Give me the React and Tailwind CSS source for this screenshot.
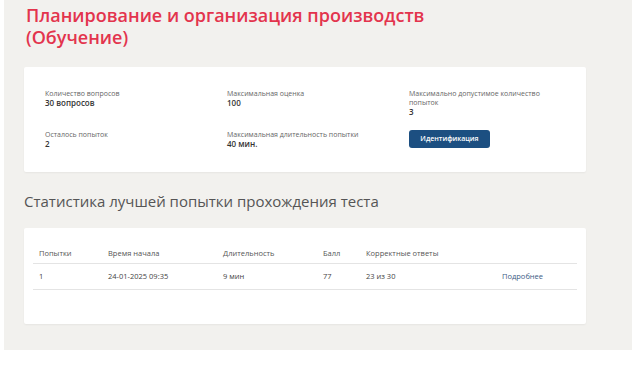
import React from 'react';

const facts = [
  [
    { label: 'Количество вопросов', value: '30 вопросов' },
    { label: 'Максимальная оценка', value: '100' },
    { label: 'Максимально допустимое количество попыток', value: '3' },
  ],
  [
    { label: 'Осталось попыток', value: '2' },
    { label: 'Максимальная длительность попытки', value: '40 мин.' },
    null,
  ],
];

const columns = ['Попытки', 'Время начала', 'Длительность', 'Балл', 'Корректные ответы', ''];
const rows = [['1', '24-01-2025 09:35', '9 мин', '77', '23 из 30']];

const App = () => {
  return (
    <div className="w-[632px] h-[367px] bg-white pl-[4px] font-['Open_Sans',sans-serif]">
      <div className="h-[350px] bg-[#f2f1ee] pl-[20px] pr-[46px] pt-[4px]">
        {/* Page title */}
        <h1 className="ml-[2px] text-[18px] leading-[22px] font-semibold text-[#e3344d]">
          Планирование и организация производств
          <br />
          (Обучение)
        </h1>

        {/* Test info card */}
        <div className="mt-[19px] bg-white rounded-[2px] shadow-[0_1px_2px_rgba(0,0,0,0.05)] pl-[21px] pt-[22px] pb-[23px]">
          <div className="grid grid-cols-[182px_182px_140px] gap-y-[13px]">
            {facts.flat().map((item, index) =>
              item ? (
                <div key={index}>
                  <div className="text-[7px] leading-[9px] text-[#666]">{item.label}</div>
                  <div className="text-[8px] leading-[10px] font-semibold text-[#333]">{item.value}</div>
                </div>
              ) : (
                <div key={index}>
                  <button className="block h-[18px] w-[81px] rounded-[3px] bg-[#1c4f81] text-[7px] font-semibold text-white">
                    Идентификация
                  </button>
                </div>
              )
            )}
          </div>
        </div>

        {/* Best attempt stats */}
        <h2 className="mt-[18px] text-[15px] leading-[22px] text-[#555]">
          Статистика лучшей попытки прохождения теста
        </h2>

        <div className="mt-[16px] bg-white rounded-[2px] shadow-[0_1px_2px_rgba(0,0,0,0.05)] px-[9px] pt-[16px] pb-[34px]">
          <div className="grid grid-cols-[69px_115px_100px_43px_136px_1fr] text-[7.5px]">
            {columns.map((col, index) => (
              <div
                key={index}
                className="h-[20px] pl-[6px] flex items-center border-b border-[#e4e4e4] text-[#555]"
              >
                {col}
              </div>
            ))}
            {rows.map((row, r) => (
              <React.Fragment key={r}>
                {row.map((cell, c) => (
                  <div
                    key={c}
                    className="h-[26px] pl-[6px] flex items-center border-b border-[#e4e4e4] text-[#444]"
                  >
                    {cell}
                  </div>
                ))}
                <div className="h-[26px] pl-[6px] flex items-center border-b border-[#e4e4e4] text-[#3d5c84]">
                  Подробнее
                </div>
              </React.Fragment>
            ))}
          </div>
        </div>
      </div>
    </div>
  );
};

export default App;
